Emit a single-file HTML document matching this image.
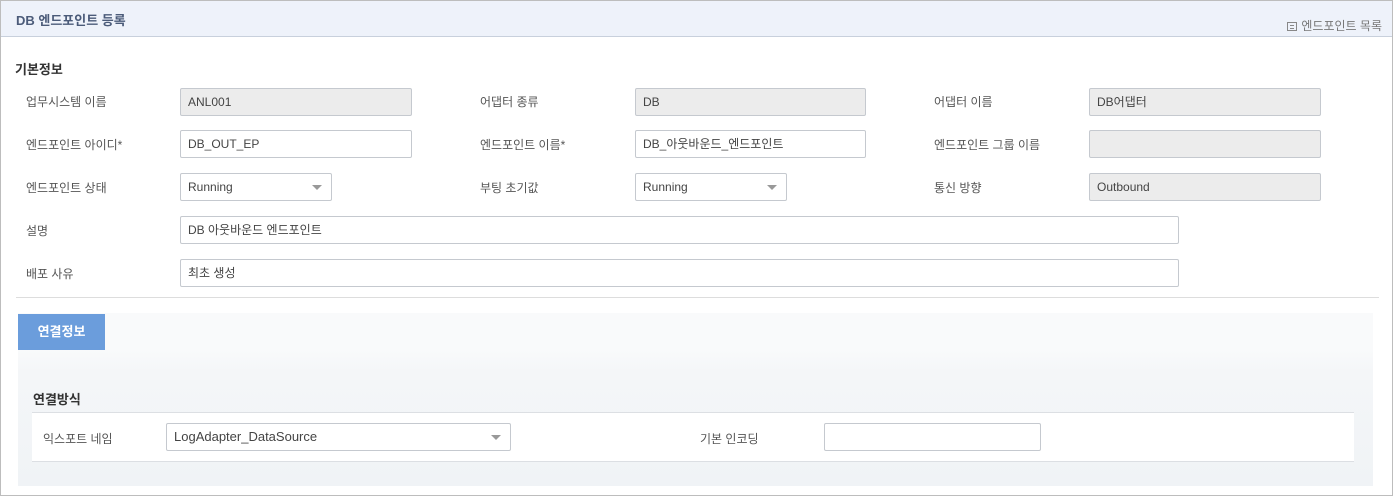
<!DOCTYPE html>
<html><head><meta charset="utf-8"><style>
*{box-sizing:border-box;margin:0;padding:0}
body{width:1393px;height:496px;background:#fff;font-family:"Liberation Sans","Noto Sans CJK KR",sans-serif;font-size:12px;color:#555;position:relative;overflow:hidden}
.frame{position:absolute;left:0;top:0;width:1393px;height:496px;border:1px solid #bdbdbd}
.hdr{position:absolute;left:1px;top:1px;width:1391px;height:36px;background:#eef2fa;border-bottom:1px solid #c8d0dc}
.t{position:absolute;left:15px;top:9px;font-size:13px;font-weight:bold;color:#4b5b79}
.lk{position:absolute;right:10px;top:16px;font-size:12px;color:#777}
.a{position:absolute;white-space:nowrap}
.lb{position:absolute;font-size:12px;color:#555}
.in{position:absolute;height:28px;border:1px solid #c5c9cf;border-radius:2px;background:#fff;padding:0 7px;line-height:26px;font-size:12px;color:#444}
.ro{background:#ececec}
.sel:after{content:"";position:absolute;right:9px;top:11px;border:5px solid transparent;border-top:5px solid #999;border-bottom:0}
.h{position:absolute;font-size:13px;font-weight:bold;color:#333}
</style></head><body>
<div class="frame"></div>
<div class="hdr"><div class="t">DB 엔드포인트 등록</div>
<div class="lk"><span style="display:inline-block;width:10px;height:9px;border:1px solid #888;vertical-align:-1px;margin-right:4px;background:linear-gradient(#888,#888) 2px 2px/4px 1px no-repeat,linear-gradient(#888,#888) 2px 5px/4px 1px no-repeat"></span>엔드포인트 목록</div></div>
<div class="h" style="left:15px;top:59px">기본정보</div>

<div class="lb" style="left:26px;top:93px">업무시스템 이름</div>
<div class="in ro" style="left:180px;top:88px;width:232px">ANL001</div>
<div class="lb" style="left:480px;top:93px">어댑터 종류</div>
<div class="in ro" style="left:635px;top:88px;width:231px">DB</div>
<div class="lb" style="left:934px;top:93px">어댑터 이름</div>
<div class="in ro" style="left:1089px;top:88px;width:232px">DB어댑터</div>

<div class="lb" style="left:26px;top:136px">엔드포인트 아이디*</div>
<div class="in" style="left:180px;top:130px;width:232px">DB_OUT_EP</div>
<div class="lb" style="left:480px;top:136px">엔드포인트 이름*</div>
<div class="in" style="left:635px;top:130px;width:231px">DB_아웃바운드_엔드포인트</div>
<div class="lb" style="left:934px;top:136px">엔드포인트 그룹 이름</div>
<div class="in ro" style="left:1089px;top:130px;width:232px"></div>

<div class="lb" style="left:26px;top:179px">엔드포인트 상태</div>
<div class="in sel" style="left:180px;top:173px;width:152px">Running</div>
<div class="lb" style="left:480px;top:179px">부팅 초기값</div>
<div class="in sel" style="left:635px;top:173px;width:152px">Running</div>
<div class="lb" style="left:934px;top:179px">통신 방향</div>
<div class="in ro" style="left:1089px;top:173px;width:232px">Outbound</div>

<div class="lb" style="left:26px;top:222px">설명</div>
<div class="in" style="left:180px;top:216px;width:999px">DB 아웃바운드 엔드포인트</div>
<div class="lb" style="left:26px;top:265px">배포 사유</div>
<div class="in" style="left:180px;top:259px;width:999px">최초 생성</div>

<div class="a" style="left:16px;top:297px;width:1363px;height:1px;background:#ddd"></div>

<div class="a" style="left:18px;top:313px;width:1355px;height:173px;background:linear-gradient(#f9fafb 0,#f9fafb 37px,#f4f6f8 60px,#f0f3f6 100%)"></div>
<div class="a" style="left:18px;top:314px;width:87px;height:36px;background:#6b9ddc;color:#fff;font-weight:bold;font-size:13px;line-height:36px;text-align:center">연결정보</div>
<div class="h" style="left:33px;top:389px">연결방식</div>
<div class="a" style="left:32px;top:412px;width:1322px;height:50px;background:#fff;border-top:1px solid #dcdfe3;border-bottom:1px solid #dcdfe3"></div>
<div class="lb" style="left:43px;top:430px">익스포트 네임</div>
<div class="in sel" style="left:166px;top:423px;width:345px;font-size:13px">LogAdapter_DataSource</div>
<div class="lb" style="left:700px;top:430px">기본 인코딩</div>
<div class="in" style="left:824px;top:423px;width:217px"></div>
</body></html>
